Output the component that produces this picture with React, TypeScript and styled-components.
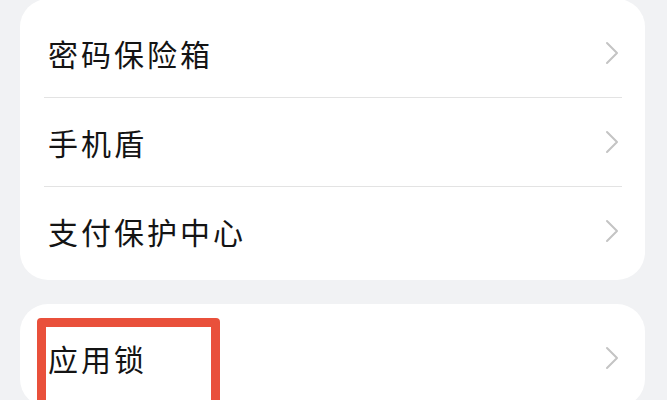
import React from 'react'
import styled, { createGlobalStyle } from 'styled-components'

const GlobalStyle = createGlobalStyle`
  html, body {
    margin: 0;
    padding: 0;
    background: #f1f2f4;
    overflow: hidden;
  }
  body {
    font-family: "Noto Sans CJK SC", "Noto Sans", sans-serif;
  }
`

const Page = styled.div`
  display: flex;
  flex-direction: column;
  gap: 24px;
  padding: 0 22px 0 20px;
  height: 400px;
  box-sizing: border-box;
`

const Card = styled.div<{ offset?: number }>`
  position: relative;
  background: #ffffff;
  border-radius: 28px;
  padding: 10px 0 5px;
  margin-top: ${({ offset }) => offset ?? 0}px;
`

const Row = styled.div`
  height: 88px;
  display: flex;
  align-items: center;
  justify-content: space-between;
  padding: 0 26px 0 28px;
`

const Label = styled.span`
  font-size: 30px;
  letter-spacing: 3px;
  color: #141414;
  font-weight: 400;
`

const Divider = styled.div`
  height: 1px;
  background: #e3e3e3;
  margin: 0 23px 0 24px;
`

const Highlight = styled.div`
  position: absolute;
  left: 17px;
  top: 14px;
  width: 183px;
  height: 110px;
  border: 9px solid #e9503b;
  border-radius: 4px;
  box-sizing: border-box;
`

const Chevron = () => (
  <svg width="14" height="24" viewBox="0 0 14 24">
    <path d="M2 2 L12 12 L2 22" fill="none" stroke="#c4c4c4" strokeWidth="2" strokeLinecap="round" strokeLinejoin="round" />
  </svg>
)

const Item: React.FC<{ label: string }> = ({ label }) => (
  <Row>
    <Label>{label}</Label>
    <Chevron />
  </Row>
)

const App: React.FC = () => {
  const security = ['密码保险箱', '手机盾', '支付保护中心']

  return (
    <>
      <GlobalStyle />
      <Page>
        <Card offset={-1}>
          {security.map((s, i) => (
            <React.Fragment key={s}>
              {i > 0 && <Divider />}
              <Item label={s} />
            </React.Fragment>
          ))}
        </Card>
        <Card>
          <Item label="应用锁" />
          <Highlight />
        </Card>
      </Page>
    </>
  )
}

export default App
